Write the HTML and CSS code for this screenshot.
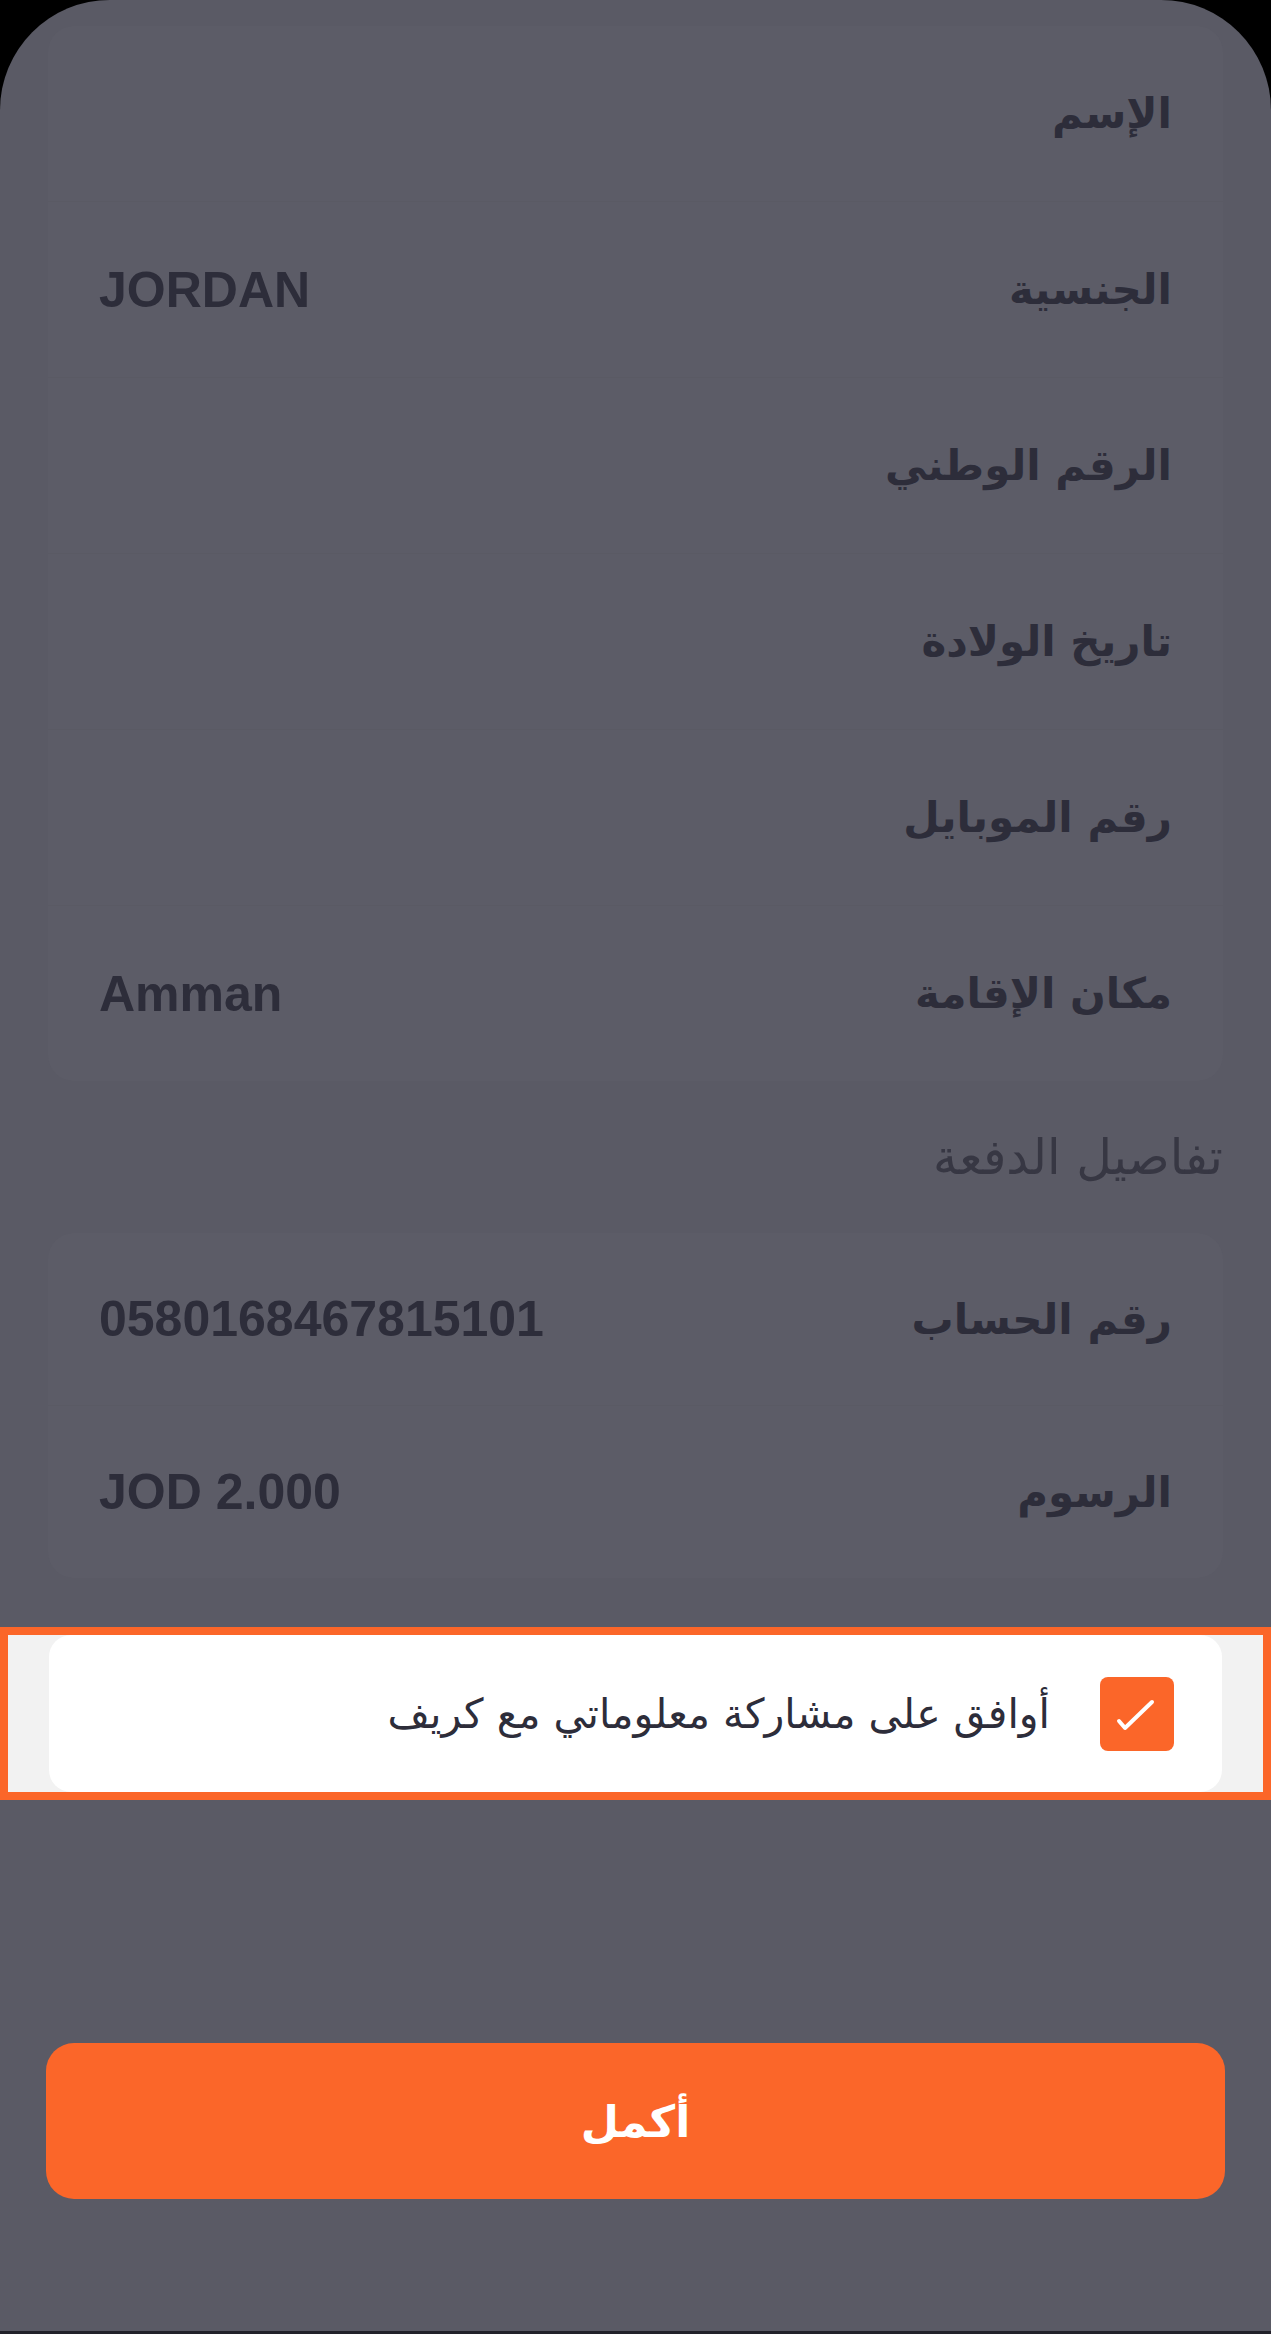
FILE: index.html
```html
<!DOCTYPE html>
<html lang="ar" dir="rtl">
<head>
  <meta charset="UTF-8">
  <title>تأكيد المعلومات</title>
  <meta name="viewport" content="width=device-width, initial-scale=1.0">
  <link rel="stylesheet" href="styles.css">
</head>
<body>
  <div class="sheet">
    <div class="card card-personal">
      <div class="row"><span class="label">الإسم</span><span class="value"></span></div>
      <div class="row"><span class="label">الجنسية</span><span class="value">JORDAN</span></div>
      <div class="row"><span class="label">الرقم الوطني</span><span class="value"></span></div>
      <div class="row"><span class="label">تاريخ الولادة</span><span class="value"></span></div>
      <div class="row"><span class="label">رقم الموبايل</span><span class="value"></span></div>
      <div class="row"><span class="label">مكان الإقامة</span><span class="value">Amman</span></div>
    </div>

    <h3 class="section-title">تفاصيل الدفعة</h3>

    <div class="card card-payment">
      <div class="row"><span class="label">رقم الحساب</span><span class="value">0580168467815101</span></div>
      <div class="row"><span class="label">الرسوم</span><span class="value">JOD 2.000</span></div>
    </div>
  </div>

  <div class="consent">
    <label class="consent-box">
      <span class="checkbox">
        <svg width="74" height="74" viewBox="0 0 74 74">
          <path d="M19 44 L25 51 L52 25" fill="none" stroke="#fff" stroke-width="4" stroke-linecap="round" stroke-linejoin="round"/>
        </svg>
      </span>
      <span class="consent-text">أوافق على مشاركة معلوماتي مع كريف</span>
    </label>
  </div>

  <div class="sheet sheet-bottom">
    <button type="button" class="primary">أكمل</button>
  </div>
</body>
</html>
```

FILE: styles.css
```css
body {
  margin: 0;
  background: #000;
  font-family: "Liberation Sans", "DejaVu Sans", sans-serif;
  color: #2d2d3a;
}
.sheet {
  background: #5a5a65;
  border-radius: 110px 110px 0 0;
  padding: 26px 48px 0;
  height: 1627px;
  box-sizing: border-box;
}
.card {
  background: #5c5c67;
  border-radius: 26px;
}
.row {
  display: flex;
  justify-content: space-between;
  align-items: center;
  height: 175px;
  padding: 0 51px;
  border-bottom: 1px solid #5a5a64;
}
.row:last-child {
  border-bottom: none;
}
.card-payment .row {
  height: 172px;
}
.label {
  font-family: "DejaVu Sans", sans-serif;
  font-weight: bold;
  font-size: 42px;
}
.value {
  font-weight: bold;
  font-size: 50px;
  direction: ltr;
}
.section-title {
  margin: 0;
  height: 152px;
  display: flex;
  align-items: center;
  font-family: "DejaVu Sans", sans-serif;
  font-weight: normal;
  font-size: 49px;
  color: #373743;
}
.consent {
  border: 8px solid #fb6629;
  background: #f2f2f2;
  padding: 0 41px;
}
.consent-box {
  display: flex;
  align-items: center;
  gap: 50px;
  height: 157px;
  padding: 0 48px;
  background: #fff;
  border-radius: 22px;
}
.checkbox {
  width: 74px;
  height: 74px;
  border-radius: 8px;
  background: #fb6629;
  display: flex;
  align-items: center;
  justify-content: center;
}
.consent-text {
  font-family: "DejaVu Sans", sans-serif;
  font-size: 41px;
  color: #2d2d3a;
}
.sheet-bottom {
  border-radius: 0;
  height: 534px;
  padding: 243px 46px 0;
  border-bottom: 3px solid #22222a;
}
.primary {
  width: 100%;
  height: 156px;
  border: none;
  border-radius: 28px;
  background: #fb6629;
  color: #fff;
  font-family: "DejaVu Sans", sans-serif;
  font-weight: bold;
  font-size: 44px;
  cursor: pointer;
}
```
